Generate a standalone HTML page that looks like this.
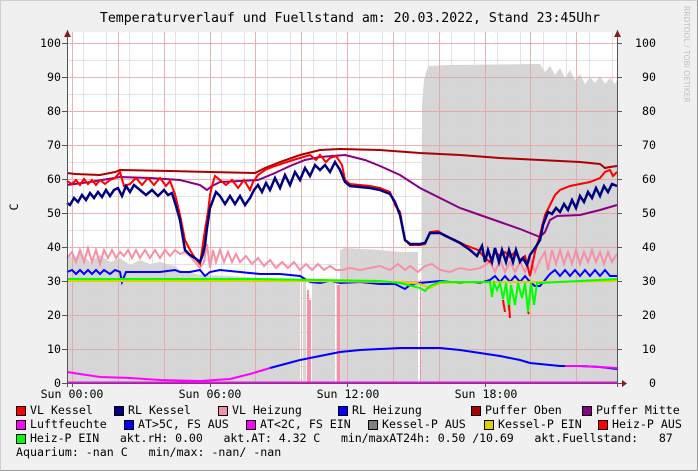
<!DOCTYPE html>
<html><head><meta charset="utf-8"><style>
html,body{margin:0;padding:0}
body{width:698px;height:471px;overflow:hidden;background:#f0f0f0;position:relative;font-family:"DejaVu Sans Mono","Liberation Mono",monospace}
.frame{position:absolute;left:0;top:0;width:696px;height:469px;border-top:1px solid #cfcfcf;border-left:1px solid #cfcfcf;border-right:1px solid #9a9a9a;border-bottom:1px solid #9a9a9a}
.t{position:absolute;font-size:11.6px;color:#000;white-space:pre;line-height:13px}
.sq{position:absolute;width:8px;height:8px;border:1px solid #000}
</style></head><body>
<div class="frame"></div>
<svg width="698" height="471" style="position:absolute;left:0;top:0" font-family="DejaVu Sans Mono, Liberation Mono, monospace">
<rect x="67" y="32" width="550" height="351" fill="#fff"/>
<path fill="#d6d6d6" d="M67,383 L67,255 L75,258 L80,252 L90,262 L100,255 L110,262 L120,258 L130,265 L140,260 L150,264 L160,262 L175,266 L180,270 L200,275 L230,276 L260,278 L300,280 L300,383 Z"/>
<path fill="#d6d6d6" d="M303,383 L303,282 L306,282 L306,383 Z M312,383 L312,283 L335,283 L335,383 Z"/>
<path fill="#d6d6d6" d="M340,383 L340,250 L345,248 L380,250 L400,252 L418,252 L418,383 Z"/>
<path fill="#d6d6d6" d="M421,383 L422,105 L424,80 L428,66 L450,65 L540,64 L545,72 L550,66 L555,75 L560,68 L565,78 L570,70 L575,80 L580,74 L585,84 L590,77 L595,83 L600,76 L605,84 L610,78 L615,84 L617,80 L617,383 Z"/>
<g stroke="#d8d8d8" stroke-width="1">
<path d="M83.5,32V383M106.5,32V383M129.5,32V383M152.5,32V383M175.5,32V383M198.5,32V383M221.5,32V383M244.5,32V383M267.5,32V383M290.5,32V383M313.5,32V383M336.5,32V383M359.5,32V383M382.5,32V383M405.5,32V383M428.5,32V383M451.5,32V383M474.5,32V383M497.5,32V383M520.5,32V383M543.5,32V383M566.5,32V383M589.5,32V383M612.5,32V383" opacity="0.7"/>
<path d="M67,366.5H617M67,332.5H617M67,298.5H617M67,264.5H617M67,230.5H617M67,196.5H617M67,162.5H617M67,128.5H617M67,94.5H617M67,60.5H617" opacity="0.7"/>
</g>
<g stroke="#e8a0a0" stroke-width="1" opacity="0.8">
<path d="M72.5,32V383M118.5,32V383M164.5,32V383M210.5,32V383M255.5,32V383M301.5,32V383M347.5,32V383M393.5,32V383M439.5,32V383M485.5,32V383M530.5,32V383M576.5,32V383"/>
<path d="M67,349.5H617M67,315.5H617M67,281.5H617M67,247.5H617M67,213.5H617M67,179.5H617M67,145.5H617M67,111.5H617M67,77.5H617M67,43.5H617"/>
</g>
<path fill="#f78fa7" d="M307,383V290H309V383Z M309,383V300H311V383Z M337,383V285H340V383Z M420,383V280H421V383Z"/>
<polyline fill="none" stroke="#ff00ff" stroke-width="2" points="67,372 80,374 100,377 130,378 160,380 200,381 230,379 250,374 270,368"/>
<polyline fill="none" stroke="#0000ff" stroke-width="2" points="270,368 300,360 320,356 340,352 360,350 380,349 400,348 420,348 440,348 460,350 480,353 500,356 520,360 530,363 560,366 580,366 600,367 617,369"/>
<polyline fill="none" stroke="#ff00ff" stroke-width="2" points="565,366 580,366 600,367 617,368"/>
<line x1="67" y1="382.5" x2="617" y2="382.5" stroke="#ff00ff" stroke-width="2"/>
<polyline fill="none" stroke="#f78fa7" stroke-width="2" points="67,258 72,252 76,262 80,250 84,262 88,248 92,262 96,250 100,264 104,250 108,258 112,250 116,258 120,252 124,256 128,250 132,258 136,250 140,258 145,250 150,258 155,250 160,258 165,250 170,256 175,250 180,254 185,252 190,256 195,262 200,268 204,262 207,244 210,268 213,250 216,262 220,250 224,262 228,252 232,262 236,254 240,262 246,256 252,264 258,258 264,266 270,260 276,268 282,262 288,268 294,262 300,270 306,264 312,270 318,264 324,270 330,266 336,270 342,270 350,268 360,270 370,268 380,266 390,270 398,264 405,270 410,266 418,272 425,266 432,264 440,270 450,272 460,268 470,270 480,268 490,262 495,272 500,260 505,272 510,262 515,272 520,262 525,272 530,258 535,272 540,260 545,252 548,270 552,250 556,264 560,250 564,264 568,252 572,264 576,250 580,264 584,252 588,262 592,250 596,262 600,252 604,264 608,252 612,262 617,254"/>
<polyline fill="none" stroke="#0000ff" stroke-width="2" points="67,272 72,270 76,274 80,270 84,274 88,270 92,274 96,270 100,274 104,270 110,274 115,270 120,272 122,282 126,272 140,272 160,272 175,270 180,272 190,272 200,270 205,276 210,272 220,270 240,272 260,274 280,274 300,276 310,282 320,283 330,281 340,283 360,282 380,284 395,284 405,289 410,285 420,283 430,282 440,281 450,282 460,283 470,282 480,283 490,280 495,276 500,282 505,276 510,282 515,276 520,282 525,276 530,282 535,286 540,286 545,280 550,274 555,270 560,276 565,270 570,276 575,270 580,276 585,270 590,276 595,270 600,276 605,270 610,276 617,276"/>
<polyline fill="none" stroke="#e0d000" stroke-width="2" points="67,281 200,281 300,281 400,282 420,284 430,288 440,283 500,282 540,282 617,281"/>
<polyline fill="none" stroke="#00ff00" stroke-width="2" points="67,279 150,279 250,279 320,280 380,281 400,283 420,288 425,291 430,286 440,282 490,282 492,297 494,283 497,290 500,283 503,299 506,283 509,310 511,285 515,305 518,283 522,298 525,283 528,312 531,283 534,305 537,283 540,283 560,282 617,279"/>
<path fill="none" stroke="#ff0000" stroke-width="2" d="M503,300L505,312M509,305L510,318M528,312L529,314"/>
<polyline fill="none" stroke="#aa0000" stroke-width="2" points="67,173 75,174 100,175 115,172 120,170 170,171 210,172 255,173 265,168 280,162 300,155 320,150 340,149 380,150 420,153 460,155 500,158 540,160 580,162 600,164 605,168 610,167 617,166"/>
<polyline fill="none" stroke="#880088" stroke-width="2" points="67,185 90,182 120,177 150,178 180,180 200,185 207,190 212,186 220,182 240,181 258,180 275,173 290,166 305,160 320,157 345,155 365,160 380,166 400,175 420,188 440,198 460,208 480,215 500,222 520,229 540,237 545,232 550,220 557,216 580,215 600,210 617,205"/>
<polyline fill="none" stroke="#ff0000" stroke-width="2" points="67,181 72,184 76,180 80,185 84,179 88,184 92,180 96,185 100,180 105,184 110,180 115,178 120,172 124,186 130,184 136,178 142,185 148,178 154,185 160,178 166,186 170,181 175,194 180,215 185,240 190,250 195,258 200,264 202,250 205,230 208,212 210,195 212,186 215,176 220,180 226,185 232,180 238,188 244,180 250,190 253,182 258,175 265,170 275,166 290,161 300,158 310,155 316,160 320,155 326,162 330,158 336,156 342,165 345,180 350,184 360,185 370,186 380,188 390,192 395,205 400,212 405,240 410,245 420,245 425,244 430,232 438,231 445,236 455,240 465,245 478,250 485,258 490,262 495,252 500,256 505,252 510,257 515,252 520,260 525,256 530,276 535,252 540,235 545,215 550,205 555,195 560,190 570,186 580,184 590,182 600,178 605,172 610,170 613,176 617,172"/>
<polyline fill="none" stroke="#000080" stroke-width="2.5" points="67,203 70,205 74,198 78,202 82,195 86,200 90,193 94,198 98,192 102,197 106,190 110,196 114,190 118,188 122,196 126,186 130,192 134,185 140,190 146,195 152,190 158,196 164,190 168,195 172,193 176,206 180,220 185,250 190,255 195,258 200,262 203,254 205,245 207,228 210,208 213,200 216,192 220,196 225,204 230,196 235,204 240,196 245,205 250,198 254,190 258,185 262,192 266,183 270,190 275,178 280,188 285,175 290,185 295,172 300,180 305,168 310,176 315,165 320,170 325,165 330,172 335,162 340,170 345,182 350,186 360,187 370,188 380,190 390,194 395,202 400,215 405,240 410,244 420,244 425,243 430,233 440,233 450,238 460,243 470,250 477,256 482,246 485,262 488,250 492,262 495,248 499,262 502,250 506,262 509,250 513,262 516,250 520,262 523,258 527,265 530,255 535,248 540,240 543,225 548,212 552,214 556,208 560,212 564,204 568,210 572,200 576,208 580,196 584,202 588,192 592,198 596,188 600,196 604,186 608,192 612,184 617,186"/>
<path stroke="#555" stroke-width="1" d="M67.5,30V387M617.5,30V387M62,383.5H622"/>
<path fill="#8b1a1a" d="M64,37L67.5,30L71,37Z M614,37L617.5,30L621,37Z M622,380L627,383.5L622,387Z"/>
<g stroke="#555"><path d="M62,43.5h5M62,77.5h5M62,111.5h5M62,145.5h5M62,179.5h5M62,213.5h5M62,247.5h5M62,281.5h5M62,315.5h5M62,349.5h5M62,383.5h5M617,43.5h5M617,77.5h5M617,111.5h5M617,145.5h5M617,179.5h5M617,213.5h5M617,247.5h5M617,281.5h5M617,315.5h5M617,349.5h5M72.5,383v4M210.5,383v4M347.5,383v4M485.5,383v4"/></g>
<g font-size="11.6" fill="#000" text-anchor="end">
<text x="61" y="47">100</text><text x="61" y="81">90</text><text x="61" y="115">80</text><text x="61" y="149">70</text><text x="61" y="183">60</text><text x="61" y="217">50</text><text x="61" y="251">40</text><text x="61" y="285">30</text><text x="61" y="319">20</text><text x="61" y="353">10</text><text x="61" y="387">0</text>
</g>
<g font-size="11.6" fill="#000">
<text x="635" y="47">100</text><text x="642" y="81">90</text><text x="642" y="115">80</text><text x="642" y="149">70</text><text x="642" y="183">60</text><text x="642" y="217">50</text><text x="642" y="251">40</text><text x="642" y="285">30</text><text x="642" y="319">20</text><text x="642" y="353">10</text><text x="649" y="387">0</text>
</g>
<g font-size="11.6" fill="#000" text-anchor="middle">
<text x="72" y="398">Sun 00:00</text><text x="210" y="398">Sun 06:00</text><text x="348" y="398">Sun 12:00</text><text x="486" y="398">Sun 18:00</text>
</g>
<text x="350" y="22" font-size="13.2" text-anchor="middle" fill="#000">Temperaturverlauf und Fuellstand am: 20.03.2022, Stand 23:45Uhr</text>
<text transform="translate(18,207) rotate(-90)" font-size="11.6" text-anchor="middle" fill="#000">C</text>
<text transform="translate(684,6) rotate(90)" font-size="7.5" fill="#c0c0c0" font-family="DejaVu Sans, sans-serif">RRDTOOL / TOBI OETIKER</text>
</svg>
<div class="sq" style="left:16px;top:406px;background:#ff0000"></div><div class="t" style="left:30px;top:404px">VL Kessel</div>
<div class="sq" style="left:114px;top:406px;background:#000080"></div><div class="t" style="left:128px;top:404px">RL Kessel</div>
<div class="sq" style="left:218px;top:406px;background:#f78fa7"></div><div class="t" style="left:232px;top:404px">VL Heizung</div>
<div class="sq" style="left:338px;top:406px;background:#0000ff"></div><div class="t" style="left:352px;top:404px">RL Heizung</div>
<div class="sq" style="left:471px;top:406px;background:#aa0000"></div><div class="t" style="left:485px;top:404px">Puffer Oben</div>
<div class="sq" style="left:582px;top:406px;background:#880088"></div><div class="t" style="left:596px;top:404px">Puffer Mitte</div>
<div class="sq" style="left:16px;top:420px;background:#ff00ff"></div><div class="t" style="left:30px;top:418px">Luftfeuchte</div>
<div class="sq" style="left:124px;top:420px;background:#0000ff"></div><div class="t" style="left:138px;top:418px">AT&gt;5C, FS AUS</div>
<div class="sq" style="left:246px;top:420px;background:#ff00ff"></div><div class="t" style="left:260px;top:418px">AT&lt;2C, FS EIN</div>
<div class="sq" style="left:368px;top:420px;background:#808080"></div><div class="t" style="left:382px;top:418px">Kessel-P AUS</div>
<div class="sq" style="left:484px;top:420px;background:#e0d000"></div><div class="t" style="left:498px;top:418px">Kessel-P EIN</div>
<div class="sq" style="left:598px;top:420px;background:#ff0000"></div><div class="t" style="left:612px;top:418px">Heiz-P AUS</div>
<div class="sq" style="left:16px;top:434px;background:#00ff00"></div><div class="t" style="left:30px;top:432px;letter-spacing:-0.07px">Heiz-P EIN   akt.rH: 0.00   akt.AT: 4.32 C   min/maxAT24h: 0.50 /10.69   akt.Fuellstand:   87</div>
<div class="t" style="left:16px;top:446px">Aquarium: -nan C   min/max: -nan/ -nan</div>
</body></html>
